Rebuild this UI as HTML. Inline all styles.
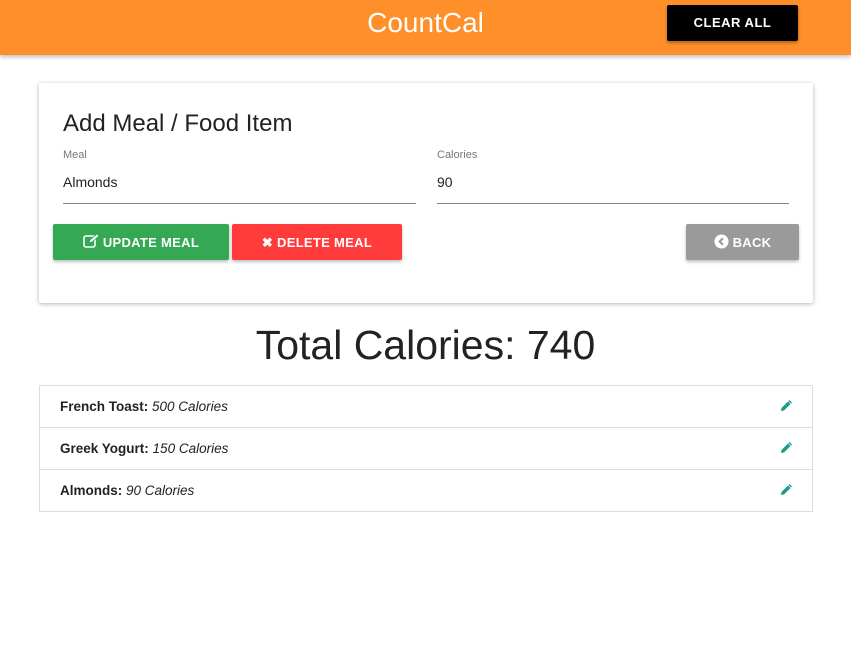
<!DOCTYPE html>
<html><head><style>
*{box-sizing:border-box;margin:0;padding:0}
body{width:851px;height:648px;background:#fff;font-family:"Liberation Sans",sans-serif;color:#222;position:relative;overflow:hidden}
.hdr{position:absolute;left:0;top:0;width:851px;height:55px;background:#ff8f28;box-shadow:0 2px 4px rgba(0,0,0,.25)}
.hdr h1{position:absolute;left:0;width:851px;text-align:center;top:7px;font-weight:normal;font-size:28px;color:#fff}
.clear{position:absolute;left:667px;top:5px;width:131px;height:36px;background:#000;color:#fff;font-size:13px;font-weight:bold;text-align:center;line-height:36px;letter-spacing:.5px;border-radius:2px;box-shadow:0 2px 3px rgba(0,0,0,.3)}
.card{position:absolute;left:39px;top:83px;width:774px;height:220px;background:#fff;box-shadow:0 1px 4px rgba(0,0,0,.3);border-radius:2px}
.abs{position:absolute}
.lbl{font-size:11px;color:#777}
.val{font-size:14px;color:#222}
.line{height:1px;background:#888}
.btn{position:absolute;top:224px;height:36px;color:#fff;font-size:13px;font-weight:bold;line-height:37px;text-align:center;border-radius:2px;box-shadow:0 2px 3px rgba(0,0,0,.25);letter-spacing:.3px}
.list{position:absolute;left:39px;top:385px;width:774px;height:127px;border:1px solid #ddd}
.row{height:42px;border-bottom:1px solid #ddd;position:relative;font-size:13.5px;line-height:41px;padding-left:20px}
.row:last-child{border-bottom:none}
.row b{font-weight:bold}
.row svg{position:absolute;right:20px;top:14px}
</style></head><body>
<div class="hdr"><h1>CountCal</h1><div class="clear">CLEAR ALL</div></div>
<div class="card"></div>
<div class="abs" style="left:63px;top:110px;font-size:24px;font-weight:300;color:#222">Add Meal / Food Item</div>
<div class="abs lbl" style="left:63px;top:149px">Meal</div>
<div class="abs val" style="left:63px;top:174px">Almonds</div>
<div class="abs line" style="left:63px;top:203px;width:353px"></div>
<div class="abs lbl" style="left:437px;top:149px">Calories</div>
<div class="abs val" style="left:437px;top:174px">90</div>
<div class="abs line" style="left:437px;top:203px;width:352px"></div>
<div class="btn" style="left:53px;width:176px;background:#34a853">
<svg width="16" height="14" viewBox="0 0 16 14" style="vertical-align:-1px"><rect x="1" y="2" width="11" height="11" rx="2" fill="none" stroke="#fff" stroke-width="1.6"/><path d="M6 9l1-3 7-6 2 2-7 6z" fill="#fff" stroke="#34a853" stroke-width=".8"/></svg> UPDATE MEAL</div>
<div class="btn" style="left:232px;width:170px;background:#ff3b3b"><span>✖</span> DELETE MEAL</div>
<div class="btn" style="left:686px;width:113px;background:#9a9a9a">
<svg width="15" height="15" viewBox="0 0 16 16" style="vertical-align:-2px"><circle cx="8" cy="8" r="7.5" fill="#fff"/><path d="M9.5 4.5L6 8l3.5 3.5" fill="none" stroke="#9a9a9a" stroke-width="2.2"/></svg> BACK</div>
<div class="abs" style="left:0;width:851px;text-align:center;top:322px;font-size:41px;color:#222">Total Calories: 740</div>
<div class="list">
<div class="row"><b>French Toast:</b> <i>500 Calories</i><svg width="12" height="12" viewBox="0 0 12 12"><path d="M1 11l.5-3L8 1.5l2.5 2.5L4 10.5z" fill="#1a9c8c"/><path d="M8.5 1l1-1 2.5 2.5-1 1z" fill="#1a9c8c"/></svg></div>
<div class="row"><b>Greek Yogurt:</b> <i>150 Calories</i><svg width="12" height="12" viewBox="0 0 12 12"><path d="M1 11l.5-3L8 1.5l2.5 2.5L4 10.5z" fill="#1a9c8c"/><path d="M8.5 1l1-1 2.5 2.5-1 1z" fill="#1a9c8c"/></svg></div>
<div class="row"><b>Almonds:</b> <i>90 Calories</i><svg width="12" height="12" viewBox="0 0 12 12"><path d="M1 11l.5-3L8 1.5l2.5 2.5L4 10.5z" fill="#1a9c8c"/><path d="M8.5 1l1-1 2.5 2.5-1 1z" fill="#1a9c8c"/></svg></div>
</div>
</body></html>
